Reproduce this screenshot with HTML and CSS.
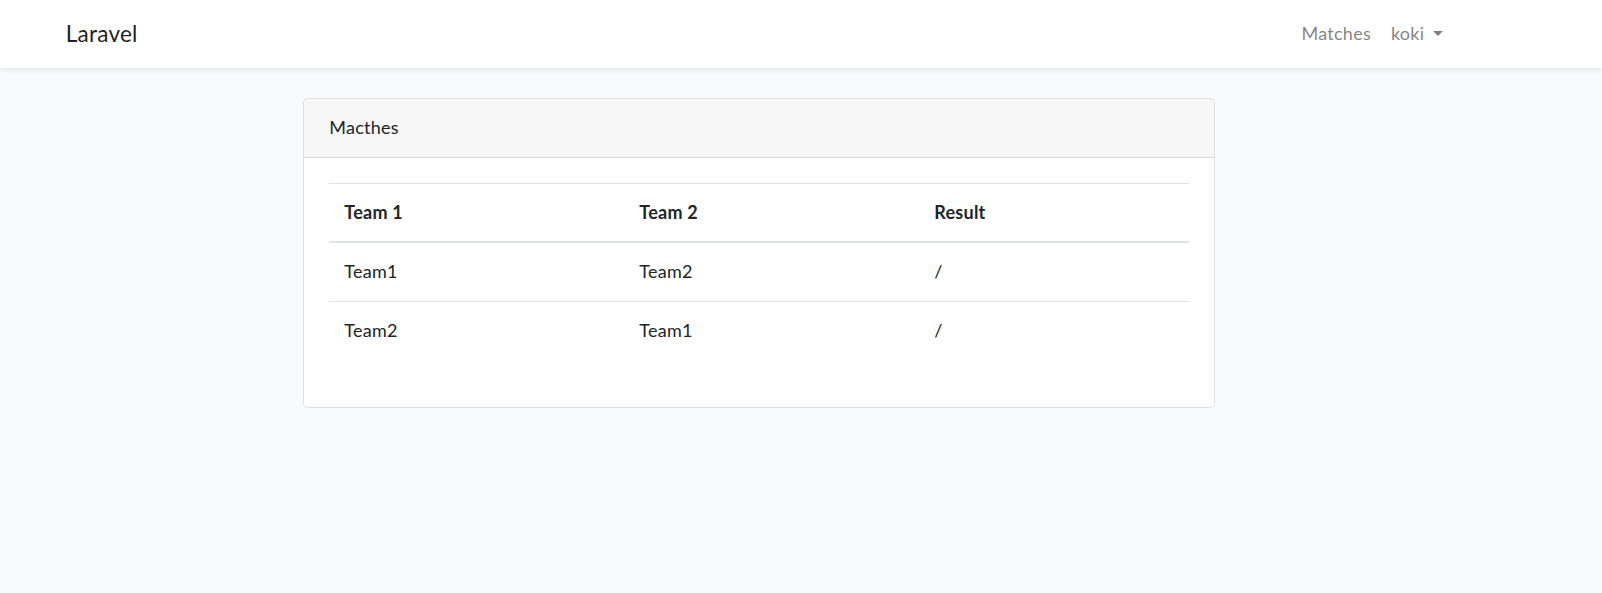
FILE: index.html
```html
<!DOCTYPE html>
<html lang="en">
<head>
<meta charset="utf-8">
<title>Laravel</title>
<link rel="stylesheet" href="styles.css">
</head>
<body>
<div class="app">
  <nav class="navbar">
    <div class="container nav-container">
      <a class="navbar-brand" href="#">Laravel</a>
      <ul class="navbar-nav">
        <li class="nav-item"><a class="nav-link" href="#">Matches</a></li>
        <li class="nav-item"><a class="nav-link dropdown-toggle" href="#">koki</a></li>
      </ul>
    </div>
  </nav>
  <main class="main">
    <div class="container">
      <div class="row">
        <div class="col">
          <div class="card">
            <div class="card-header">Macthes</div>
            <div class="card-body">
              <table class="table">
                <thead>
                  <tr>
                    <th class="col-team">Team 1</th>
                    <th class="col-team">Team 2</th>
                    <th>Result</th>
                  </tr>
                </thead>
                <tbody>
                  <tr>
                    <td>Team1</td>
                    <td>Team2</td>
                    <td>/</td>
                  </tr>
                  <tr>
                    <td>Team2</td>
                    <td>Team1</td>
                    <td>/</td>
                  </tr>
                </tbody>
              </table>
            </div>
          </div>
        </div>
      </div>
    </div>
  </main>
</div>
</body>
</html>
```
FILE: styles.css
```css
* { box-sizing: border-box; }

html, body {
  margin: 0;
  padding: 0;
}

body {
  background: #f8fafc;
  color: #212529;
  font-family: "Lato", "Nunito", "Open Sans", sans-serif;
  font-size: 18px;
  line-height: 27.6px;
  letter-spacing: 0.25px;
  height: 593px;
  overflow: hidden;
}

a { text-decoration: none; }

.container {
  width: 1425px;
  margin-left: 47px;
  padding: 0 18.75px;
}

.navbar {
  background: #fff;
  padding: 10px 20px;
  box-shadow: 0 2.5px 5px rgba(0, 0, 0, 0.075);
  position: relative;
  z-index: 1;
}

.navbar .nav-container {
  margin-left: 27px;
  display: flex;
  align-items: center;
  justify-content: space-between;
}

.navbar-brand {
  font-size: 22.5px;
  line-height: 36px;
  padding: 6px 0;
  color: rgba(0, 0, 0, 0.9);
}

.navbar-nav {
  list-style: none;
  margin: 0;
  padding: 0;
  display: flex;
}

.nav-link {
  display: block;
  padding: 10px 10px;
  color: rgba(0, 0, 0, 0.5);
}

.dropdown-toggle::after {
  content: "";
  display: inline-block;
  margin-left: 9px;
  vertical-align: 4.6px;
  border-top: 5.4px solid;
  border-right: 5.4px solid transparent;
  border-left: 5.4px solid transparent;
  border-bottom: 0;
}

.main {
  padding: 30px 0;
}

.row {
  display: flex;
  justify-content: center;
  margin: 0 -18.75px;
}

.col {
  width: 950px;
  padding: 0 18.75px;
}

.card {
  background: #fff;
  border: 1px solid rgba(0, 0, 0, 0.125);
  border-radius: 5px;
  width: 912px;
}

.card-header {
  padding: 15px 25px;
  background: rgba(0, 0, 0, 0.03);
  border-bottom: 1px solid rgba(0, 0, 0, 0.125);
  border-radius: 4px 4px 0 0;
}

.card-body {
  padding: 25px;
}

.table {
  width: 100%;
  border-collapse: collapse;
  margin-bottom: 23px;
  color: #212529;
}

.table th,
.table td {
  padding: 15px;
  text-align: left;
  vertical-align: top;
  border-top: 1px solid #dee2e6;
}

.table th {
  font-weight: 700;
}

.table thead th {
  vertical-align: bottom;
  border-bottom: 2.5px solid #dee2e6;
}

.col-team {
  width: 295px;
}
```
